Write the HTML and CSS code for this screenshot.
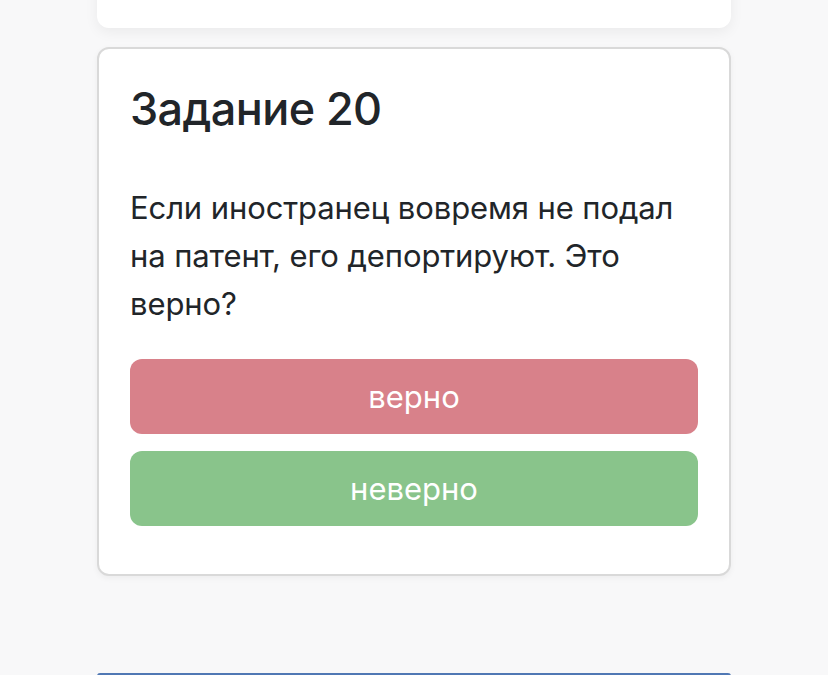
FILE: index.html
```html
<!DOCTYPE html>
<html lang="ru">
<head>
<meta charset="utf-8">
<link rel="stylesheet" href="styles.css">
</head>
<body>
<div class="page">
  <div class="card card-prev"></div>
  <div class="card card-task">
    <h2 class="task-title">Задание 20</h2>
    <p class="task-text">Если иностранец вовремя не подал на патент, его депортируют. Это верно?</p>
    <button class="answer answer-wrong">верно</button>
    <button class="answer answer-right">неверно</button>
  </div>
  <div class="next-bar"></div>
</div>
</body>
</html>
```
FILE: styles.css
```css
html, body {
  margin: 0;
  padding: 0;
  background: #f8f8f9;
  height: 675px;
  overflow: hidden;
}
body {
  font-family: Inter, "Noto Sans", "Liberation Sans", sans-serif;
  color: #212529;
}
.page {
  width: 634px;
  margin: 0 auto 0 97px;
  display: flex;
  flex-direction: column;
}
.card {
  background: #fff;
  box-sizing: border-box;
}
.card-prev {
  height: 120px;
  margin-top: -92px;
  border-radius: 12px;
  box-shadow: 0 4px 14px rgba(0, 0, 0, 0.06);
}
.card-task {
  margin-top: 19px;
  border: 2px solid #d9d9d9;
  border-radius: 12px;
  padding: 31px 31px 31px;
  box-shadow: 0 2px 6px rgba(0, 0, 0, 0.05);
  display: flex;
  flex-direction: column;
}
.task-title {
  margin: 0 0 47px;
  font-size: 45px;
  font-weight: 500;
  line-height: 57px;
  letter-spacing: -0.6px;
}
.task-text {
  margin: 0 0 31px;
  font-size: 31px;
  line-height: 48px;
  letter-spacing: -0.1px;
}
.answer {
  height: 75px;
  border: 0;
  border-radius: 12px;
  color: #fff;
  font-family: inherit;
  font-size: 31px;
  margin: 0 0 17px;
  padding: 0;
}
.answer-wrong {
  background: #d8818a;
}
.answer-right {
  background: #89c48b;
}
.next-bar {
  margin-top: 97px;
  height: 3px;
  background: #5078b4;
  border-radius: 12px 12px 0 0;
}
```
